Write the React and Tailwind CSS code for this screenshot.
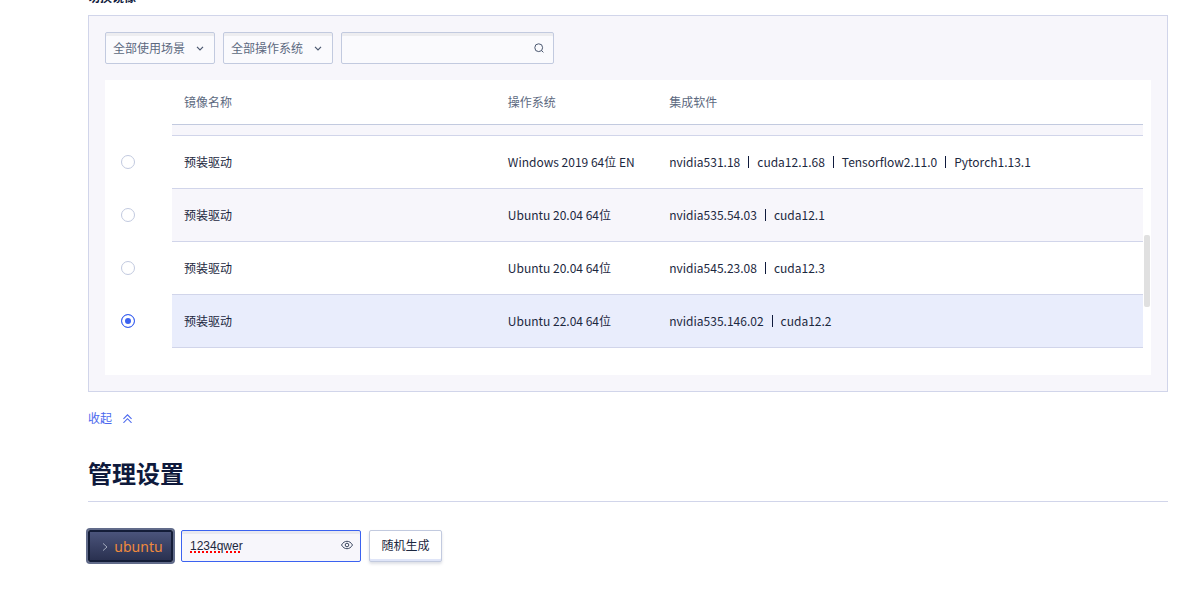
import { useState } from 'react';

const IMAGES = [
  { id: 'win2019', name: '预装驱动', os: 'Windows 2019 64位 EN', software: ['nvidia531.18', 'cuda12.1.68', 'Tensorflow2.11.0', 'Pytorch1.13.1'] },
  { id: 'ubuntu2004-535', name: '预装驱动', os: 'Ubuntu 20.04 64位', software: ['nvidia535.54.03', 'cuda12.1'] },
  { id: 'ubuntu2004-545', name: '预装驱动', os: 'Ubuntu 20.04 64位', software: ['nvidia545.23.08', 'cuda12.3'] },
  { id: 'ubuntu2204-535', name: '预装驱动', os: 'Ubuntu 22.04 64位', software: ['nvidia535.146.02', 'cuda12.2'] },
];

function rowColor(index, active) {
  if (active) return 'bg-[#e9edfc]';
  return index % 2 === 1 ? 'bg-[#f7f6fb]' : 'bg-white';
}

function FilterSelect({ label }) {
  return (
    <div className="relative">
      <select
        aria-label={label}
        className="block h-8 w-[110px] appearance-none rounded-xs border border-[#c2cadf] bg-[#fafafd] pr-6 pl-[7px] text-xs text-[#5c6980] shadow-[inset_0_3px_0_#ededf0] outline-none"
      >
        <option>{label}</option>
      </select>
      <svg className="pointer-events-none absolute top-3 right-[11px] h-2 w-2" viewBox="0 0 8 8" fill="none" stroke="#4b5870" strokeWidth="1.2">
        <path d="M1 2.8 4 5.8 7 2.8" />
      </svg>
    </div>
  );
}

function ImageTable() {
  const [selected, setSelected] = useState('ubuntu2204-535');

  return (
    <div className="relative bg-white pr-2 pb-[27px]">
      <table className="w-full table-fixed border-separate border-spacing-0 text-left text-xs text-[#1c2840]">
        <colgroup>
          <col className="w-[67px]" />
          <col className="w-[31.2%]" />
          <col className="w-[15.55%]" />
          <col />
        </colgroup>
        <thead>
          <tr className="h-[45px] text-[#5c6980]">
            <td />
            <th scope="col" className="border-b border-[#c2cadf] px-3 font-normal">镜像名称</th>
            <th scope="col" className="border-b border-[#c2cadf] px-3 font-normal">操作系统</th>
            <th scope="col" className="border-b border-[#c2cadf] px-3 font-normal">集成软件</th>
          </tr>
        </thead>
        <tbody>
          <tr className="h-[11px]" aria-hidden="true">
            <td />
            <td colSpan={3} className="border-b border-[#d1d5ea] bg-[#f7f6fb]" />
          </tr>
          {IMAGES.map((image, index) => {
            const active = image.id === selected;
            const cell = `border-b border-[#d1d5ea] px-3 ${rowColor(index, active)}`;
            return (
              <tr key={image.id} className="h-[53px]">
                <td className="border-b border-transparent pl-4">
                  <input
                    type="radio"
                    name="image"
                    aria-label={`${image.name} ${image.os}`}
                    checked={active}
                    onChange={() => setSelected(image.id)}
                    className="block h-3.5 w-3.5 appearance-none rounded-full border border-[#c2cadf] bg-white checked:border-[#3b62f0] checked:bg-[#3b62f0] checked:shadow-[inset_0_0_0_3px_#fff]"
                  />
                </td>
                <td className={cell}>{image.name}</td>
                <td className={cell}>{image.os}</td>
                <td className={cell}>
                  <div className="flex items-center">
                    {image.software.map((item) => (
                      <span key={item} className="mr-2 border-[#0f1a3c] leading-3 not-last:border-r not-last:pr-2">{item}</span>
                    ))}
                  </div>
                </td>
              </tr>
            );
          })}
        </tbody>
      </table>
      <div className="absolute top-[155px] right-px h-[72px] w-1.5 rounded-xs bg-[#e0e0e0]" />
    </div>
  );
}

export default function App() {
  return (
    <main className="overflow-hidden bg-white pr-[13px] pl-[88px] font-['Noto_Sans_CJK_SC',sans-serif] text-xs text-[#1c2840]">
      <h3 className="-mt-[13px] mb-2 leading-5 font-bold text-[#0f1a3c]">切换镜像</h3>

      <section className="border border-[#d1d5ea] bg-[#f7f6fb] p-4">
        <div className="mb-4 flex gap-2">
          <FilterSelect label="全部使用场景" />
          <FilterSelect label="全部操作系统" />
          <div className="relative">
            <input
              type="text"
              aria-label="搜索镜像"
              className="block h-8 w-[213px] rounded-xs border border-[#c2cadf] bg-[#fafafd] pr-8 pl-2 shadow-[inset_0_3px_0_#ededf0] outline-none"
            />
            <svg className="pointer-events-none absolute top-[11px] right-2.5 h-2.5 w-2.5" viewBox="0 0 10 10" fill="none" stroke="#4b5870">
              <circle cx="4.7" cy="4.7" r="3.9" />
              <path d="M7.4 7.4 9.4 9.4" />
            </svg>
          </div>
        </div>
        <ImageTable />
      </section>

      <button type="button" className="mt-4 flex items-center gap-[11px] leading-5 text-[#4b68ee]">
        收起
        <svg className="h-[9px] w-[9px]" viewBox="0 0 8 8" fill="none" stroke="currentColor">
          <path d="M.4 4.4 4 .8 7.6 4.4M.4 7.8 4 4.2 7.6 7.8" />
        </svg>
      </button>

      <h2 className="mt-[27px] border-b border-[#d1d5ea] pb-2.5 text-2xl leading-9 font-bold text-[#0f1a3c]">管理设置</h2>

      <form className="mt-7 mb-10 flex items-center gap-2">
        <button
          type="button"
          className="flex h-8 w-[85px] items-center justify-center gap-1.5 rounded-xs border-2 border-[#141d38] bg-linear-to-b from-[#4b547b] to-[#2a3150] pt-px pl-1 font-['Noto_Sans',sans-serif] text-sm text-[#f08a3c] ring-2 ring-[#616b8a]"
        >
          <svg className="h-2 w-1.5" viewBox="0 0 6 8" fill="none" stroke="#a3abbd">
            <path d="M1 .4 5 4 1 7.6" />
          </svg>
          ubuntu
        </button>
        <div className="relative">
          <input
            type="text"
            aria-label="密码"
            defaultValue="1234qwer"
            className="block h-8 w-[180px] rounded-xs border border-[#3b62f0] bg-[#f7f6fb] pr-8 pl-2 font-['Liberation_Sans',sans-serif] shadow-[inset_0_3px_0_#e9e9f0] outline-none [text-decoration-color:#f00] [text-decoration-line:underline] [text-decoration-style:dotted] [text-decoration-thickness:2px]"
          />
          <button type="button" aria-label="显示密码" className="absolute top-[9px] right-2">
            <svg className="h-3 w-3" viewBox="0 0 12 12" fill="none" stroke="#3d4961">
              <path d="M.5 6C2 3.400 3.900 2.300 6 2.300S10 3.400 11.500 6C10 8.600 8.100 9.700 6 9.700S2 8.600.5 6Z" />
              <circle cx="6" cy="6" r="1.800" />
            </svg>
          </button>
        </div>
        <button
          type="button"
          className="h-8 w-[73px] rounded-xs border border-[#c2cadf] bg-white pb-0.5 shadow-[inset_0_-2px_0_#dfe5f8,0_2px_3px_rgba(30,40,80,0.15)]"
        >
          随机生成
        </button>
      </form>
    </main>
  );
}
